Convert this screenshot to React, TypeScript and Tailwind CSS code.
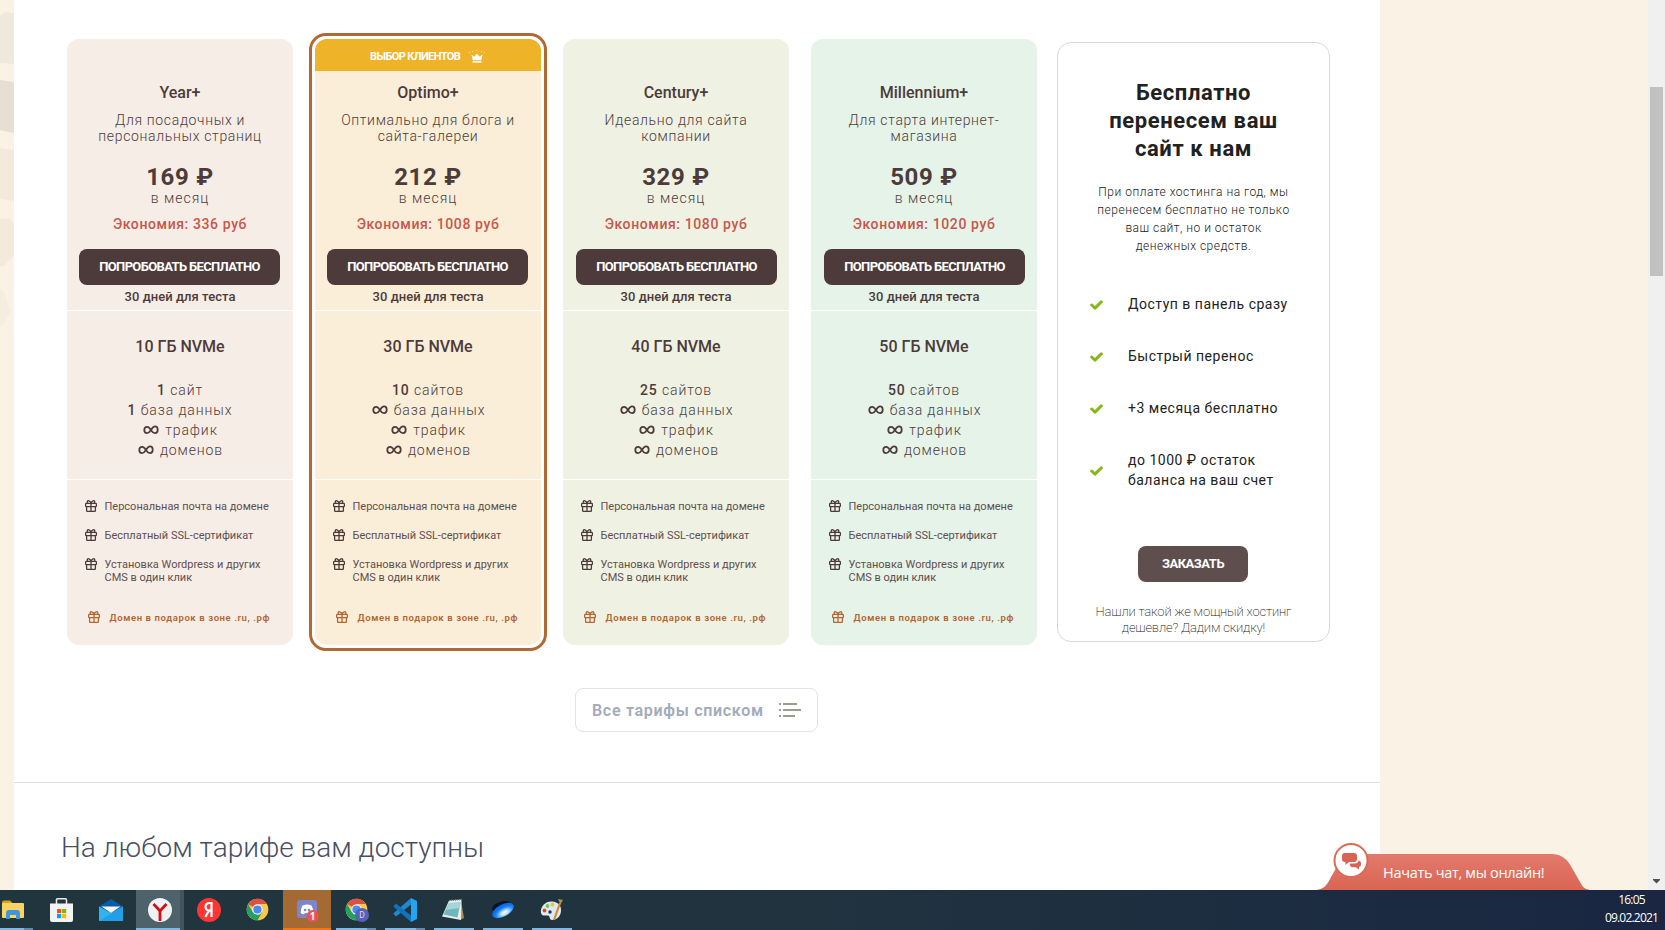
import React from "react";

type Plan = {
  name: string;
  desc: [string, string];
  price: string;
  save: string;
  disk: string;
  sites: [string, string];
  bases: string;
  bg: string;
  buttonInset: string;
  best?: boolean;
};

const plans: Plan[] = [
  { name: "Year+", desc: ["Для посадочных и", "персональных страниц"], price: "169 ₽", save: "336", disk: "10", sites: ["1", "сайт"], bases: "1", bg: "bg-[#f7ede7]", buttonInset: "ml-3" },
  { name: "Optimo+", desc: ["Оптимально для блога и", "сайта-галереи"], price: "212 ₽", save: "1008", disk: "30", sites: ["10", "сайтов"], bases: "", bg: "bg-[#faeed8]", buttonInset: "ml-3", best: true },
  { name: "Century+", desc: ["Идеально для сайта", "компании"], price: "329 ₽", save: "1080", disk: "40", sites: ["25", "сайтов"], bases: "", bg: "bg-[#eff2e3]", buttonInset: "ml-[13px]" },
  { name: "Millennium+", desc: ["Для старта интернет-", "магазина"], price: "509 ₽", save: "1020", disk: "50", sites: ["50", "сайтов"], bases: "", bg: "bg-[#e5f3e9]", buttonInset: "ml-[13px]" },
];

function Gift() {
  return (
    <svg viewBox="0 0 12 12" className="size-3 shrink-0" fill="none" stroke="currentColor" strokeWidth="1.3">
      <rect x="0.6" y="3.4" width="10.8" height="3.2" rx="0.8" />
      <path d="M1.6 6.6v4a.8.8 0 0 0 .8.8h7.2a.8.8 0 0 0 .8-.8v-4M6 3.2v8.2M6 3.2C5.4.6 2.2-.2 2.2 2c0 .6.3 1.2.8 1.4M6 3.2C6.6.6 9.8-.2 9.8 2c0 .6-.3 1.2-.8 1.4" />
    </svg>
  );
}

function Infinity() {
  return (
    <svg viewBox="0 0 16 10" className="mr-1.5 ml-px inline-block h-[10px] w-4 align-[0px]" fill="none" stroke="currentColor" strokeWidth="1.8">
      <path d="M8 5.2C6.8 2.8 5.6 1.8 4.1 1.8 2.4 1.8 1.3 3.1 1.3 5s1.1 3.2 2.7 3.2c1.800 0 2.800-1.400 4-3.200C9.300 2.800 10.400 1.400 12 1.400c1.700 0 2.700 1.400 2.700 3.300 0 2-1.100 3.400-2.800 3.400-1.500 0-2.600-1-3.900-2.900z" />
    </svg>
  );
}

function Crown() {
  return (
    <svg viewBox="0 0 16 13" className="mt-0.5 h-[13px] w-4" fill="#fff">
      <path d="M2.500 4.500 5.300 6.800 8 3.800l2.700 3 2.800-2.300-1.200 5.700H3.700z" />
      <rect x="3.500" y="11.200" width="9" height="1.400" />
      <g opacity="0.6">
        <rect x="0" y="2" width="1" height="1" />
        <rect x="3" y="1" width="1" height="1" />
        <rect x="7.500" y="0" width="1" height="1" />
        <rect x="12" y="1" width="1" height="1" />
        <rect x="15" y="2" width="1" height="1" />
      </g>
    </svg>
  );
}

function PlanCard({ p }: { p: Plan }) {
  return (
    <div className={`flex h-[606px] w-[226px] flex-col overflow-hidden rounded-xl text-center text-[#4d3b3a] ${p.bg}`}>
      <div className="h-11">
        {p.best && (
          <div className="flex h-8 items-center bg-[#efb32a] pl-[55px]">
            <span className="w-[99px] pt-1 text-left text-[11px] font-bold tracking-[-0.6px] whitespace-nowrap text-white">ВЫБОР КЛИЕНТОВ</span>
            <Crown />
          </div>
        )}
      </div>
      <h3 className="text-base leading-5 font-medium">{p.name}</h3>
      <p className="mt-[9px] text-sm leading-4 font-light tracking-[0.66px]">
        {p.desc[0]}
        <br />
        {p.desc[1]}
      </p>
      <p className="mt-[21px] text-2xl leading-6 font-bold tracking-[0.7px]">{p.price}</p>
      <p className="mt-px text-sm leading-4 font-light tracking-[1px]">в месяц</p>
      <p className="mt-2.5 text-sm leading-4 font-medium tracking-[0.6px] text-[#c9564a]">Экономия: {p.save} руб</p>
      <button className={`mt-[17px] h-9 w-[201px] shrink-0 rounded-lg bg-[#4d3a3a] text-[13px] font-bold tracking-[-0.65px] whitespace-nowrap text-white ${p.buttonInset}`}>
        ПОПРОБОВАТЬ БЕСПЛАТНО
      </button>
      <p className="mt-1 text-[13px] leading-4 font-medium tracking-[0.05px]">30 дней для теста</p>
      <div className="mt-[5px] h-px shrink-0 bg-white" />
      <p className="mt-[26px] text-base leading-5 font-medium">{p.disk} ГБ NVMe</p>
      <div className="mt-[23px] text-sm leading-5 font-light tracking-[0.9px]">
        <p><b className="font-medium">{p.sites[0]}</b> {p.sites[1]}</p>
        <p>{p.bases ? <><b className="font-medium">{p.bases}</b> </> : <Infinity />}база данных</p>
        <p><Infinity />трафик</p>
        <p><Infinity />доменов</p>
      </div>
      <div className="mt-[19px] h-px shrink-0 bg-white" />
      <ul className="mt-5 flex flex-col gap-4 pl-[18px] text-left text-[11px] leading-[13px]">
        <li className="flex gap-[7.5px]"><Gift /><span className="text-[#5f4f4d]">Персональная почта на домене</span></li>
        <li className="flex gap-[7.5px]"><Gift /><span className="text-[#5f4f4d]">Бесплатный SSL-сертификат</span></li>
        <li className="flex gap-[7.5px]"><Gift /><span className="text-[#5f4f4d]">Установка Wordpress и других<br />CMS в один клик</span></li>
      </ul>
      <div className="mt-[27px] flex gap-[9.5px] pl-[21px] text-[9.5px] leading-[14px] font-semibold tracking-[0.6px] whitespace-nowrap text-[#b5652f]">
        <Gift />Домен в подарок в зоне .ru, .рф
      </div>
    </div>
  );
}

const perks: string[][] = [["Доступ в панель сразу"], ["Быстрый перенос"], ["+3 месяца бесплатно"], ["до 1000 ₽ остаток", "баланса на ваш счет"]];

function TransferCard() {
  return (
    <div className="mt-[9px] ml-5 flex h-[600px] w-[273px] flex-col rounded-[14px] border border-[#d9d9d9] text-center text-[#212121]">
      <h2 className="mt-9 text-[22px] leading-7 font-bold tracking-[0.6px]">
        Бесплатно<br />перенесем ваш<br />сайт к нам
      </h2>
      <p className="mt-5 text-xs leading-[18px] font-light tracking-[0.5px]">
        При оплате хостинга на год, мы<br />перенесем бесплатно не только<br />ваш сайт, но и остаток<br />денежных средств.
      </p>
      <ul className="mt-[39px] flex flex-col gap-8 pl-8 text-left text-sm leading-5 tracking-[0.5px]">
        {perks.map((lines) => (
          <li key={lines[0]} className="flex items-center gap-[25px]">
            <svg viewBox="0 0 13 10" className="mt-0.5 h-2.5 w-[13px]" fill="none" stroke="#86b81b" strokeWidth="3" strokeLinecap="round" strokeLinejoin="round">
              <path d="M1.700 5 5 8.100 11.300 1.900" />
            </svg>
            <span>{lines.map((l) => <span key={l} className="block">{l}</span>)}</span>
          </li>
        ))}
      </ul>
      <button className="mt-14 ml-20 h-9 w-[110px] shrink-0 rounded-lg bg-[#5f4e4e] text-[13px] font-bold tracking-[-0.5px] text-white">ЗАКАЗАТЬ</button>
      <p className="mt-[22px] text-[13px] leading-4 font-extralight tracking-[-0.15px]">
        Нашли такой же мощный хостинг<br />дешевле? Дадим скидку!
      </p>
    </div>
  );
}

function Chrome({ badge }: { badge?: boolean }) {
  return (
    <svg viewBox="0 0 24 24" className="size-6">
      <circle cx="11.500" cy="11.500" r="10.800" fill="#fbc94a" />
      <path d="M11.500 11.500 2.150 6.100A10.800 10.800 0 0 1 20.850 6.100L11.500 6.100z" fill="#dd5144" />
      <path d="M2.150 6.100A10.800 10.800 0 0 0 11.500 22.300L16.200 14.200 11.500 11.500 6.820 14.200z" fill="#22a162" />
      <circle cx="11.500" cy="11.500" r="5.200" fill="#f4f4f4" />
      <circle cx="11.500" cy="11.500" r="4.100" fill="#4a8af4" />
      {badge && (
        <>
          <circle cx="17" cy="17" r="7" fill="#5560b8" />
          <text x="17" y="20" fontSize="8.500" textAnchor="middle" fill="#d9dcf5" fontFamily="Roboto, sans-serif">D</text>
        </>
      )}
    </svg>
  );
}

function Explorer() {
  return (
    <svg viewBox="0 0 24 24" className="size-6">
      <path d="M2 4.500a2 2 0 0 1 2-2h6l2 2v4H2z" fill="#e0a010" />
      <rect x="2" y="5" width="22" height="15" rx="1" fill="#fbd367" />
      <path d="M6 21v-6a3 3 0 0 1 3-3h8a3 3 0 0 1 3 3v6h-4v-4H10v4z" fill="#3d97d8" />
    </svg>
  );
}

function Store() {
  return (
    <svg viewBox="0 0 24 24" className="size-6">
      <path d="M6.500 6V1.800Q6.500.8 7.500.8h8q1 0 1 1V6" fill="none" stroke="#e8eaea" strokeWidth="1.500" />
      <path d="M0 5.500h23V22a2 2 0 0 1-2 2H2a2 2 0 0 1-2-2z" fill="#f3f3f3" />
      <path d="M7 11h4.200v4.200H7z" fill="#f25022" />
      <path d="M12 11h4.200v4.200H12z" fill="#7fba00" />
      <path d="M7 16h4.200v4.200H7z" fill="#00a4ef" />
      <path d="M12 16h4.200v4.200H12z" fill="#ffb900" />
    </svg>
  );
}

function Mail() {
  return (
    <svg viewBox="0 0 24 24" className="size-6">
      <path d="M0 8.500 12 1l12 7.500V12H0z" fill="#0a5cab" />
      <path d="M0 8.500 12 15l12-6.500V23H0z" fill="#2fb4ef" />
      <path d="M24 8.500 0 23h24z" fill="#1b93e0" opacity=".65" />
      <path d="M2.500 8.500h19L12 15z" fill="#f2f5f7" />
    </svg>
  );
}

function YBrowser() {
  return (
    <svg viewBox="0 0 24 24" className="size-6">
      <circle cx="12" cy="12" r="12" fill="#f1f1f1" />
      <path d="M5.500 6 12 13l6.500-7M12 13v10" fill="none" stroke="#cf1016" strokeWidth="2.800" />
    </svg>
  );
}

function Yandex() {
  return (
    <svg viewBox="0 0 24 24" className="size-6">
      <circle cx="12" cy="12" r="12" fill="#fc3535" />
      <path d="M14.500 19V5h-1.800C10 5 8.600 6.700 8.600 8.800c0 2.200 1.300 3.700 3.600 3.700h2.200M12 12.500 8.300 19" fill="none" stroke="#fff" strokeWidth="2.200" />
    </svg>
  );
}

function Discord() {
  return (
    <svg viewBox="0 0 24 24" className="size-6">
      <rect x="2" y="2" width="20" height="18" rx="3" fill="#7b86cb" />
      <path d="M7.500 7.500q4.500-1.800 9 0 2.200 4 1.800 7.500-1.800 1.500-3.300 1.200l-.8-1.200h-4.400l-.8 1.200q-1.500.3-3.300-1.200-.4-3.500 1.800-7.500z" fill="#fff" />
      <circle cx="10" cy="12" r="1.300" fill="#7b86cb" />
      <circle cx="14" cy="12" r="1.300" fill="#7b86cb" />
      <circle cx="17.500" cy="18" r="6" fill="#ef5350" />
      <text x="17.500" y="21.500" fontSize="10" fontWeight="700" textAnchor="middle" fill="#fff" fontFamily="Open Sans, sans-serif">1</text>
    </svg>
  );
}

function VSCode() {
  return (
    <svg viewBox="0 0 24 24" className="size-6">
      <path d="M18 0v6.500L3 18.500.3 15.500z" fill="#1f8ad2" />
      <path d="M18 24v-6.500L3 5.500.3 8.500z" fill="#0f74bd" />
      <path d="M18 0 24 3v18l-6 3z" fill="#25a5ef" />
    </svg>
  );
}

function Notepad() {
  return (
    <svg viewBox="0 0 24 24" className="size-6">
      <path d="m20 3 3 17-4 2z" fill="#b58a4a" />
      <path d="M8 2.500 20.500 1.500 20 22 1 18.500z" fill="#e6efee" />
      <path d="M8 5 19.500 4.500 16.500 19.500 2.500 16.500z" fill="#6fb7bd" />
      <path d="M8 5 19.500 4.500 18.500 10 5 12z" fill="#a5d5d7" />
      <path d="M8 2.500 20.500 1.500" stroke="#777" strokeWidth="1.500" strokeDasharray="1 1" />
    </svg>
  );
}

function Disk() {
  return (
    <svg viewBox="0 0 24 24" className="size-6">
      <defs>
        <radialGradient id="disk" cx=".52" cy=".72" r=".55">
          <stop offset="0" stopColor="#fff" />
          <stop offset=".3" stopColor="#bfe3ff" />
          <stop offset=".7" stopColor="#1c8cff" />
          <stop offset="1" stopColor="#0a6ee8" />
        </radialGradient>
      </defs>
      <ellipse cx="11" cy="9" rx="10" ry="5.500" fill="#05132b" transform="rotate(-15 11 9)" />
      <ellipse cx="12" cy="12.500" rx="11.800" ry="6" fill="url(#disk)" transform="rotate(-28 12 12.500)" />
    </svg>
  );
}

function Paint() {
  return (
    <svg viewBox="0 0 24 24" className="size-6">
      <path d="M1 15C0 8 6 3 12 3.500c6 .5 9.500 4 9 9.500S17 22 12 22c-3 0-1.500-4-4-4.500S2 19 1 15z" fill="#dcebf3" />
      <circle cx="4.500" cy="12.500" r="1.900" fill="#e2483a" />
      <circle cx="7.500" cy="8" r="1.900" fill="#7cc243" />
      <circle cx="12.500" cy="6.500" r="1.900" fill="#f2c12e" />
      <circle cx="10" cy="14" r="1.700" fill="#24323c" />
      <path d="M20 5 14 22" stroke="#d98a2b" strokeWidth="2.200" />
      <path d="m18 1 5 1-2.500 4.500z" fill="#b98a5a" />
    </svg>
  );
}

type Task = { icon: React.ReactNode; tile: string; line: string };

const tasks: Task[] = [
  { icon: <Explorer />, tile: "w-[49px] pl-0", line: "mr-[25px] border-r-[9px] border-[#5f8ab3] bg-[#76b9ed] w-[33px]" },
  { icon: <Store />, tile: "w-[49px] pl-px", line: "" },
  { icon: <Mail />, tile: "w-[38px] pl-px", line: "" },
  { icon: <YBrowser />, tile: "w-12 pl-3 bg-[#4d626b] border-r-4 border-[#42545c]", line: "w-11 -ml-3 bg-[#76b9ed]" },
  { icon: <Yandex />, tile: "w-[49px] pl-[13px]", line: "" },
  { icon: <Chrome />, tile: "w-[50px] pl-[13px]", line: "" },
  { icon: <Discord />, tile: "w-12 pl-3 bg-[#a56933]", line: "w-12 -ml-3 bg-[#ff7300]" },
  { icon: <Chrome badge />, tile: "w-[49px] pl-3.5", line: "w-10 -ml-[9px] border-r-[9px] border-[#5f8ab3] bg-[#76b9ed]" },
  { icon: <VSCode />, tile: "w-[49px] pl-[13px]", line: "w-10 -ml-2 border-r-[9px] border-[#5f8ab3] bg-[#76b9ed]" },
  { icon: <Notepad />, tile: "w-[49px] pl-3", line: "w-10 -ml-[7px] bg-[#76b9ed]" },
  { icon: <Disk />, tile: "w-[49px] pl-[13px]", line: "w-10 -ml-2 bg-[#76b9ed]" },
  { icon: <Paint />, tile: "w-[49px] pl-[13px]", line: "w-10 -ml-2 bg-[#76b9ed]" },
];

function Taskbar() {
  return (
    <footer className="flex h-10 justify-between bg-linear-to-r from-[#20363e] via-[#20333f] to-[#1a2642]">
      <div className="flex">
        {tasks.map((t, i) => (
          <div key={i} className={`flex h-10 shrink-0 flex-col pt-2 ${t.tile}`}>
            {t.icon}
            <div className={`mt-1.5 h-0.5 ${t.line}`} />
          </div>
        ))}
      </div>
      <div className="flex w-[67px] flex-col text-center font-['Open_Sans',sans-serif] text-xs leading-[18px] tracking-[-0.8px] text-white">
        <span className="mt-px">16:05</span>
        <span>09.02.2021</span>
      </div>
    </footer>
  );
}

function ChatTab() {
  return (
    <div className="absolute top-[842px] left-[1316px] h-12 w-[276px]">
      <svg viewBox="0 0 276 48" className="absolute inset-0 h-12 w-[276px]">
        <defs>
          <linearGradient id="chat" x1="0" y1="0" x2="0" y2="1">
            <stop offset="0" stopColor="#e27a6b" />
            <stop offset="1" stopColor="#db6554" />
          </linearGradient>
        </defs>
        <path d="M0 48c8-1 11-5 14-11L24 19q4-7 12-7H235c11 0 17 6 21 14l8 14c3 6 6 8 12 8z" fill="url(#chat)" />
        <circle cx="35" cy="18.500" r="16.500" fill="#fff" stroke="#dd6857" strokeWidth="2" />
        <path d="M29 11h9q3 0 3 3v3q0 3-3 3h-5l-3.500 3v-3H29q-3 0-3-3v-3q0-3 3-3z" fill="#d96252" />
        <path d="M42.500 18.500q2.500.3 2.500 2.500v1.500q0 2-2 2.500v2.500l-3-2.300h-3.500q-2.500 0-2.500-2.700 0-1 .5-1h4q4 0 4-3z" fill="#d96252" />
      </svg>
      <span className="absolute top-[20px] left-[67px] font-['Open_Sans',sans-serif] text-[14.5px] leading-[22px] tracking-[-0.3px] whitespace-nowrap text-white">Начать чат, мы онлайн!</span>
    </div>
  );
}

export default function App() {
  return (
    <div className="relative flex h-[930px] w-[1665px] flex-col overflow-hidden bg-[#faf3e5] font-[Roboto,sans-serif]">
      <div className="flex h-[890px]">
        <aside className="w-3.5">
          <svg viewBox="0 0 14 890" className="h-[890px] w-3.5">
            <path d="M0 16 5 12l9 1v51L0 63z" fill="#efe8dc" />
            <path d="M0 80 14 82v51L0 130z" fill="#e7dfd4" />
            <path d="M0 148l14 2v51L0 199z" fill="#f3eadb" />
            <path d="M0 218l10 1 4 5v31l-10 11H0z" fill="#f3eadb" />
            <path d="M0 289l3 1 8 21-8 14-3 2z" fill="#f5ede0" />
          </svg>
        </aside>
        <main className="w-[1366px] bg-white">
          <section className="h-[783px] border-b border-[#dfdfe6] pt-[33px]">
            <div className="flex h-[618px] items-start pl-[53px]">
              <div className="mt-1.5"><PlanCard p={plans[0]} /></div>
              <div className="mx-4 rounded-[17px] border-[3px] border-[#b06934] p-[3px]"><PlanCard p={plans[1]} /></div>
              <div className="mt-1.5 mr-[22px]"><PlanCard p={plans[2]} /></div>
              <div className="mt-1.5"><PlanCard p={plans[3]} /></div>
              <TransferCard />
            </div>
            <button className="mt-[37px] ml-[561px] flex h-11 w-[243px] items-center rounded-lg border border-[#e3e3e5] pl-4 text-base font-semibold tracking-[0.7px] whitespace-nowrap text-[#a2abba]">
              <span className="w-[187px] pt-0.5 text-left">Все тарифы списком</span>
              <svg viewBox="0 0 22 14" className="h-3.5 w-[22px]" fill="#9c9c94">
                <path d="M0 0h2v2H0zM4 0h14v2H4zM0 6h2v2H0zM4 6h18v2H4zM0 12h2v2H0zM4 12h12v2H4z" />
              </svg>
            </button>
          </section>
          <h1 className="mt-[49px] ml-[47px] text-[28px] leading-8 font-light text-[#474e61]">На любом тарифе вам доступны</h1>
        </main>
        <div className="flex-1" />
        <div className="flex w-[17px] flex-col justify-between bg-[#f0f0f0]">
          <div className="mt-[87px] ml-0.5 h-[189px] w-[13px] bg-[#c1c1c1]" />
          <svg viewBox="0 0 17 17" className="size-[17px]"><path d="M5 6h7v1l-3.500 3.500L5 7z" fill="#505050" /></svg>
        </div>
      </div>
      <Taskbar />
      <ChatTab />
    </div>
  );
}
